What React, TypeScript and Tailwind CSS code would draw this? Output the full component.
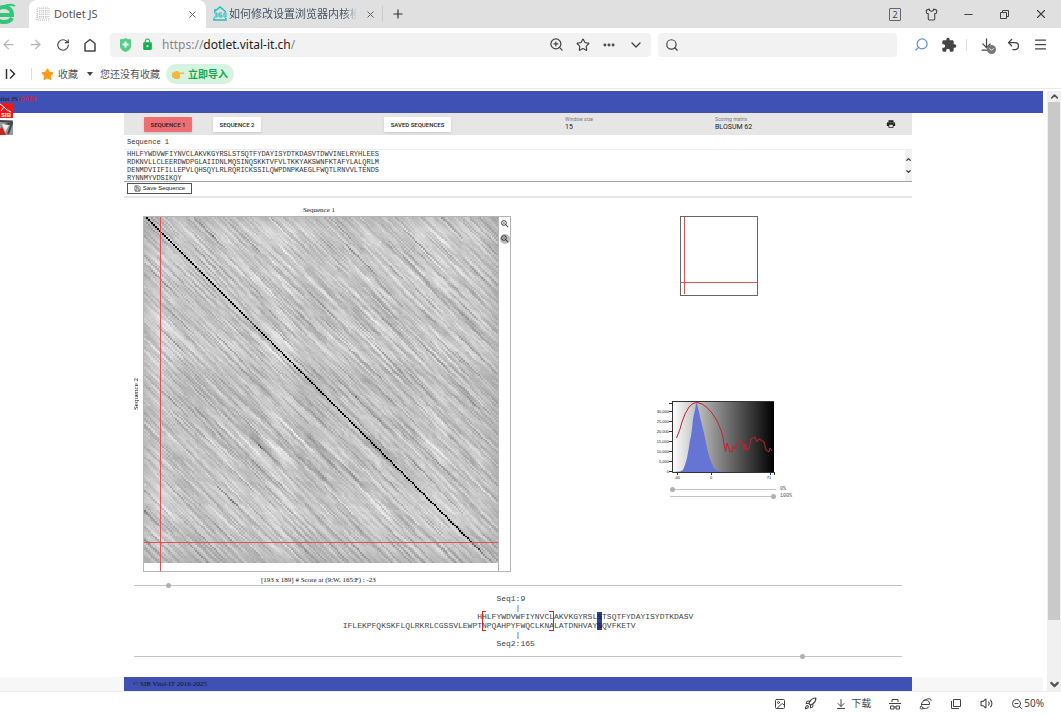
import { useEffect, useRef, useState } from "react";
import type { ReactNode } from "react";
import {
  ArrowDownToLine,
  ArrowLeft,
  ArrowRight,
  ChevronDown,
  ChevronUp,
  Ellipsis,
  Image as ImageIcon,
  Menu,
  Minus,
  Plus,
  Rocket,
  RotateCw,
  Save,
  Search,
  Shirt,
  Star,
  Undo2,
  Volume2,
  X,
  ZoomIn,
  ZoomOut,
} from "lucide-react";
import {
  MdExtension,
  MdLock,
  MdPrint,
  MdZoomIn,
  MdZoomOut,
} from "react-icons/md";

const SEQ1 =
  "HHLFYWDVWFIYNVCLAKVKGYRSLSTSQTFYDAYISYDTKDASVTDWVINELRYHLEES" +
  "RDKNVLLCLEERDWDPGLAIIDNLMQSINQSKKTVFVLTKKYAKSWNFKTAFYLALQRLM" +
  "DENMDVIIFILLEPVLQHSQYLRLRQRICKSSILQWPDNPKAEGLFWQTLRNVVLTENDS" +
  "RYNNMYVDSIKQY";

const SEQ2 =
  "HLYFWDVWYIYHFCKAKIKGYQRLISPDCCYDAFIVYDTKDPAVTEWVLAELVAKLEDP" +
  "REKHFNLCLEERDWLPGQPVLENLSQSIQLSKKTVFVMTDKYAKTENFKIAFYLSHQRLM" +
  "DEKVDVIILIFLEKPFQKSKFLQLRKRLCGSSVLEWPTNPQAHPYFWQCLKNALATDNHV" +
  "AYSQVFKETV";

const AMINO = "ARNDCQEGHILKMFPSTWYV";
const BLOSUM62 = [
  [4, -1, -2, -2, 0, -1, -1, 0, -2, -1, -1, -1, -1, -2, -1, 1, 0, -3, -2, 0],
  [-1, 5, 0, -2, -3, 1, 0, -2, 0, -3, -2, 2, -1, -3, -2, -1, -1, -3, -2, -3],
  [-2, 0, 6, 1, -3, 0, 0, 0, 1, -3, -3, 0, -2, -3, -2, 1, 0, -4, -2, -3],
  [-2, -2, 1, 6, -3, 0, 2, -1, -1, -3, -4, -1, -3, -3, -1, 0, -1, -4, -3, -3],
  [0, -3, -3, -3, 9, -3, -4, -3, -3, -1, -1, -3, -1, -2, -3, -1, -1, -2, -2, -1],
  [-1, 1, 0, 0, -3, 5, 2, -2, 0, -3, -2, 1, 0, -3, -1, 0, -1, -2, -1, -2],
  [-1, 0, 0, 2, -4, 2, 5, -2, 0, -3, -3, 1, -2, -3, -1, 0, -1, -3, -2, -2],
  [0, -2, 0, -1, -3, -2, -2, 6, -2, -4, -4, -2, -3, -3, -2, 0, -2, -2, -3, -3],
  [-2, 0, 1, -1, -3, 0, 0, -2, 8, -3, -3, -1, -2, -1, -2, -1, -2, -2, 2, -3],
  [-1, -3, -3, -3, -1, -3, -3, -4, -3, 4, 2, -3, 1, 0, -3, -2, -1, -3, -1, 3],
  [-1, -2, -3, -4, -1, -2, -3, -4, -3, 2, 4, -2, 2, 0, -3, -2, -1, -2, -1, 1],
  [-1, 2, 0, -1, -3, 1, 1, -2, -1, -3, -2, 5, -1, -3, -1, 0, -1, -3, -2, -2],
  [-1, -1, -2, -3, -1, 0, -2, -3, -2, 1, 2, -1, 5, 0, -2, -1, -1, -1, -1, 1],
  [-2, -3, -3, -3, -2, -3, -3, -3, -1, 0, 0, -3, 0, 6, -4, -2, -2, 1, 3, -1],
  [-1, -2, -2, -1, -3, -1, -1, -2, -2, -3, -3, -1, -2, -4, 7, -1, -1, -4, -3, -2],
  [1, -1, 1, 0, -1, 0, 0, 0, -1, -2, -2, 0, -1, -2, -1, 4, 1, -3, -2, -2],
  [0, -1, 0, -1, -1, -1, -1, -2, -2, -1, -1, -1, -1, -2, -1, 1, 5, -2, -2, 0],
  [-3, -3, -4, -4, -2, -2, -3, -2, -2, -3, -2, -3, -1, 1, -4, -3, -2, 11, 2, -3],
  [-2, -2, -2, -3, -2, -1, -2, -3, 2, -1, -1, -2, -1, 3, -3, -2, -2, 2, 7, -1],
  [0, -3, -3, -3, -1, -2, -2, -3, -3, 3, 1, -2, 1, -1, -2, -2, 0, -3, -1, 4],
];

const HALF_WINDOW = 7;
const MIN_SCORE = -47;
const MAX_SCORE = 76;

function scoreAt(i: number, j: number) {
  let sum = 0;
  for (let k = -HALF_WINDOW; k <= HALF_WINDOW; k++) {
    const a = SEQ1[i + k];
    const b = SEQ2[j + k];
    if (a && b) sum += BLOSUM62[AMINO.indexOf(a)][AMINO.indexOf(b)];
  }
  return sum;
}

// light background, steep ramp to black for the real matches
function greyFor(score: number) {
  const t = (score - MIN_SCORE) / (MAX_SCORE - MIN_SCORE);
  const shade = t < 0.52 ? t * 0.88 : 0.46 + (t - 0.52) * 5;
  return Math.round(255 * (1 - Math.max(0, Math.min(1, shade))));
}

function DotPlot() {
  const ref = useRef<HTMLCanvasElement>(null);

  useEffect(() => {
    const ctx = ref.current?.getContext("2d");
    if (!ctx) return;
    const w = SEQ1.length;
    const h = SEQ2.length;
    const image = ctx.createImageData(w, h);
    for (let j = 0; j < h; j++) {
      for (let i = 0; i < w; i++) {
        const grey = greyFor(scoreAt(i, j));
        image.data.set([grey, grey, grey, 255], (j * w + i) * 4);
      }
    }
    ctx.putImageData(image, 0, 0);
  }, []);

  return (
    <div className="flex w-[368px] border border-[#b5b5b5]">
      <div className="relative h-[354px] w-[354px]">
        <canvas
          ref={ref}
          width={SEQ1.length}
          height={SEQ2.length}
          className="h-[346px] w-[354px] [image-rendering:pixelated]"
        />
        <svg className="absolute inset-0" width="354" height="354">
          <path d="M16.5 0V354M0 325.5H354" stroke="#e05252" fill="none" />
        </svg>
      </div>
      <div className="flex flex-1 flex-col items-center gap-[5px] border-l border-[#b5b5b5] pt-[2px] text-[#333]">
        <button aria-label="Zoom in">
          <MdZoomIn size={10} />
        </button>
        <button aria-label="Zoom out" className="rounded-full bg-[#bbb]">
          <MdZoomOut size={10} />
        </button>
      </div>
    </div>
  );
}

const yTicks = ["30,000", "25,000", "20,000", "15,000", "10,000", "5,000", "0"];

function Histogram() {
  return (
    <svg width="132" height="82" viewBox="0 0 132 82" className="block">
      <defs>
        <linearGradient id="shade">
          <stop offset="0" stopColor="#fff" />
          <stop offset="0.15" stopColor="#d8d8d8" />
          <stop offset="0.5" stopColor="#7c7c7c" />
          <stop offset="1" stopColor="#000" />
        </linearGradient>
      </defs>
      <rect x="20" y="1" width="102" height="71" fill="url(#shade)" />
      <path
        d="M20 72L28 71.5 31 70 33 65 35 58 37 47 38 40 39 36 40 29 41 19 42 14 43 10 44 4 45 3 46 8 47 12 48 17 50 25 52 33 54 43 56 52 58 59 60 64 62 68 64 70 67 71 75 72Z"
        fill="#6674d4"
      />
      <path
        d="M24.5 38L28 29 30 22 33 14 37 7 41 3.5 45 2.5 50 4 55 7.5 60 13 65 21 69 30 71 37 72 44 73.5 52 75 43 78 52 80 52 81 46 83 49 85 43 89 40 91 44 92 50 93 44 95 50 97 49 99 39 103 37 105 42 107 39 109 40 112 42 114 50 117 52 118 48 120 51"
        fill="none"
        stroke="#c8202c"
      />
      <path d="M20.5 1V72.5H122M17 3.5H20M20 1.5H122" stroke="#333" fill="none" />
      {yTicks.map((label, i) => (
        <g key={label}>
          <path d={`M17 ${11.5 + i * 10}H20`} stroke="#333" />
          <text x="17" y={13 + i * 10} textAnchor="end" fontSize="4" fill="#111">
            {label}
          </text>
        </g>
      ))}
      <path d="M25.5 72V75M59.5 72V75M118.5 72V75M122.5 72V75" stroke="#333" />
      <text x="25" y="79" textAnchor="middle" fontSize="4" fill="#111">-40</text>
      <text x="59" y="79" textAnchor="middle" fontSize="4" fill="#111">0</text>
      <text x="117" y="79" textAnchor="middle" fontSize="4" fill="#111">71</text>
    </svg>
  );
}

type SliderProps = {
  label: string;
  min?: number;
  max: number;
  initial: number;
  className?: string;
};

function Slider({ label, min = 0, max, initial, className = "w-full" }: SliderProps) {
  const [value, setValue] = useState(initial);
  return (
    <input
      type="range"
      aria-label={label}
      min={min}
      max={max}
      value={value}
      onChange={(e) => setValue(Number(e.target.value))}
      className={`block h-[5px] appearance-none bg-[linear-gradient(#c4c4c4,#c4c4c4)] bg-[length:100%_1px] bg-center bg-no-repeat [&::-webkit-slider-thumb]:size-[5px] [&::-webkit-slider-thumb]:appearance-none [&::-webkit-slider-thumb]:rounded-full [&::-webkit-slider-thumb]:bg-[#b0b0b0] ${className}`}
    />
  );
}

function IconButton({ label, children }: { label: string; children: ReactNode }) {
  return (
    <button aria-label={label} className="flex items-center justify-center">
      {children}
    </button>
  );
}

function TabBar() {
  return (
    <div className="flex h-7 items-center bg-[#e0e0e0] text-[11px] text-[#555]">
      <div className="flex h-full w-[29px] items-center overflow-hidden">
        <svg width="17" height="26" viewBox="0 0 17 26" fill="none">
          <path
            d="M-3 14H12C12 8 8 6 4 6C-1 6 -4 9 -4 14C-4 19 0 21 4 21C8 21 11 19 12 17"
            stroke="#2fc779"
            strokeWidth="4"
          />
          <path d="M2 6C8 3 12 3 15 5" stroke="#2fc779" strokeWidth="2" />
        </svg>
      </div>
      <div className="flex h-full w-[177px] items-center rounded-t-lg bg-white pr-2 pl-[7px]">
        <svg width="14" height="14" viewBox="0 0 14 14">
          <path
            d="M1 1H13V13H1ZM4 1V13M7 1V13M10 1V13M1 4H13M1 7H13M1 10H13"
            stroke="#bbb"
            fill="none"
            strokeDasharray="1 1"
          />
        </svg>
        <span className="ml-1 flex-1">Dotlet JS</span>
        <IconButton label="Close tab">
          <X size={11} strokeWidth={2} />
        </IconButton>
      </div>
      <div className="flex h-full w-[170px] items-center pl-[7px]">
        <svg width="14" height="16" viewBox="0 0 14 16" fill="none" stroke="#1fbfc0" strokeWidth="1.5">
          <path d="M1 6L7 1 13 6M2 5V3M1 12V14H13V12" />
          <path d="M1 7H4V11H1M2 9H4M6 7H9M6 7V11H9V9H6M11 7H13V11H11Z" strokeWidth="1" />
        </svg>
        <span className="ml-[2px] w-[128px] overflow-hidden whitespace-nowrap text-[#445566] [mask-image:linear-gradient(90deg,#000_90%,transparent)]">
          如何修改设置浏览器内核模式
        </span>
        <span className="flex-1" />
        <IconButton label="Close tab">
          <X size={11} strokeWidth={2} />
        </IconButton>
      </div>
      <div className="ml-[6px] flex h-4 items-center border-l border-[#ccc] pl-2 text-[#333]">
        <IconButton label="New tab">
          <Plus size={14} />
        </IconButton>
      </div>
      <div className="ml-auto flex items-center gap-6 pr-[13px] text-[#444]">
        <button className="flex h-[13px] w-3 items-center justify-center rounded-[1px] border border-[#666] text-[9px] leading-none">
          2
        </button>
        <IconButton label="Skins">
          <Shirt size={13} />
        </IconButton>
        <IconButton label="Minimize">
          <Minus size={13} strokeWidth={2} />
        </IconButton>
        <IconButton label="Restore">
          <svg width="11" height="11" viewBox="0 0 11 11" fill="none" stroke="currentColor">
            <path d="M1.5 3.5H7.5V9.5H1.5ZM3.5 3V1.5H9.5V7.5H8" />
          </svg>
        </IconButton>
        <IconButton label="Close window">
          <X size={14} strokeWidth={2} />
        </IconButton>
      </div>
    </div>
  );
}

function AddressBar() {
  return (
    <div className="flex h-8 items-center pt-px text-[#444]">
      <div className="flex w-[110px] items-center gap-[13px] pl-px">
        <span className="flex gap-3 text-[#b5b5b5]">
          <IconButton label="Back">
            <ArrowLeft size={15} strokeWidth={2} />
          </IconButton>
          <IconButton label="Forward">
            <ArrowRight size={15} strokeWidth={2} />
          </IconButton>
        </span>
        <IconButton label="Reload">
          <RotateCw size={14} strokeWidth={2} />
        </IconButton>
        <IconButton label="Home">
          <svg width="14" height="14" viewBox="0 0 14 14" fill="none" stroke="currentColor" strokeWidth="1.5">
            <path d="M2 13V5.5L7 1.5 12 5.5V13Z" strokeLinejoin="round" />
          </svg>
        </IconButton>
      </div>
      <div className="flex h-6 flex-[527] items-center rounded-sm bg-[#f2f2f2] px-[7px]">
        <svg width="17" height="14" viewBox="0 0 17 14">
          <path d="M3 1Q6 2 8.5 0Q11 2 14 1V8Q14 12 8.5 14Q3 12 3 8Z" fill="#53cf85" />
          <path d="M8.5 3.5V9.5M5.5 6.5H11.5" stroke="#fff" strokeWidth="2" />
        </svg>
        <MdLock size={13} className="ml-[7px] text-[#14b04f]" />
        <div className="ml-2 flex-1 text-[12px] text-[#888]">
          https://<span className="text-[#222]">dotlet.vital-it.ch</span>/
        </div>
        <div className="flex items-center gap-3">
          <IconButton label="Zoom">
            <ZoomIn size={15} strokeWidth={2} />
          </IconButton>
          <IconButton label="Bookmark">
            <Star size={14} strokeWidth={2} />
          </IconButton>
          <IconButton label="More">
            <Ellipsis size={14} strokeWidth={3} />
          </IconButton>
          <IconButton label="Expand">
            <ChevronDown size={16} strokeWidth={2} />
          </IconButton>
        </div>
      </div>
      <div className="ml-[7px] flex h-6 flex-[225] items-center rounded-sm bg-[#f2f2f2] px-[7px]">
        <Search size={14} strokeWidth={2} />
        <input aria-label="Search" className="min-w-0 flex-1 bg-transparent pl-2 text-xs outline-none" />
      </div>
      <div className="flex w-[164px] items-center pl-[17px]">
        <IconButton label="Quick search">
          <Search size={15} className="-scale-x-100 text-[#5b8ee0]" />
        </IconButton>
        <span className="ml-3">
          <IconButton label="Extensions">
            <MdExtension size={16} />
          </IconButton>
        </span>
        <span className="ml-[9px] h-3 w-px bg-[#ddd]" />
        <span className="relative ml-3">
          <IconButton label="Downloads">
            <ArrowDownToLine size={15} />
          </IconButton>
          <span className="absolute top-2 left-2 flex size-[9px] items-center justify-center rounded-full bg-[#777] text-white">
            <ChevronDown size={7} strokeWidth={3} />
          </span>
        </span>
        <span className="ml-3">
          <IconButton label="Undo">
            <Undo2 size={15} />
          </IconButton>
        </span>
        <span className="ml-3">
          <IconButton label="Menu">
            <Menu size={15} />
          </IconButton>
        </span>
      </div>
    </div>
  );
}

function BookmarkBar() {
  return (
    <div className="flex h-7 items-center text-[10px] text-[#555]">
      <IconButton label="Show side bar">
        <svg width="12" height="12" viewBox="0 0 12 12" fill="none" stroke="#333" strokeWidth="1.5" className="ml-[5px]">
          <path d="M1.5 1V11M5 1.5L9.5 6 5 10.5" />
        </svg>
      </IconButton>
      <span className="ml-[14px] h-3 w-px bg-[#ddd]" />
      <Star size={13} className="ml-[9px] fill-[#ff9a16] text-[#ff9a16]" />
      <button className="ml-1 flex items-center gap-[9px]">
        收藏 <span className="w-[6px] border-x-3 border-t-4 border-x-transparent border-t-[#444]" />
      </button>
      <span className="ml-[7px]">您还没有收藏</span>
      <button className="ml-[6px] flex h-5 items-center gap-1 rounded-full bg-[#d5f3e0] px-[6px] font-bold text-[#14a851]">
        <svg width="12" height="9" viewBox="0 0 12 9">
          <path d="M0 3L4 1H6L7 2.5H12V4H8V8L6 9H3L0 7Z" fill="#f6b53d" />
        </svg>
        立即导入
      </button>
    </div>
  );
}

function ToolBar() {
  return (
    <div className="flex h-[22px] items-center bg-[#e6e6e6] pl-5 font-['Roboto',sans-serif] text-[6px] text-[#222]">
      <button className="h-[15px] w-12 rounded-[1px] bg-[#ee6e73] font-medium shadow-sm">SEQUENCE 1</button>
      <button className="ml-[21px] h-[15px] w-12 rounded-[1px] bg-white font-medium shadow-sm">SEQUENCE 2</button>
      <button className="ml-[123px] h-[15px] w-[67px] rounded-[1px] bg-white font-medium shadow-sm">
        SAVED SEQUENCES
      </button>
      <label className="ml-[114px] flex w-[150px] flex-col text-[5px] leading-[7px] text-[#777]">
        Window size
        <input defaultValue="15" className="h-[9px] w-20 bg-transparent text-[7px] leading-[9px] text-[#222]" />
      </label>
      <label className="flex w-[120px] flex-col text-[5px] leading-[7px] text-[#777]">
        Scoring matrix
        <select className="h-[9px] appearance-none bg-transparent text-[7px] leading-[9px] text-[#222]">
          <option>BLOSUM 62</option>
        </select>
      </label>
      <button aria-label="Print" className="mr-4 ml-auto">
        <MdPrint size={10} />
      </button>
    </div>
  );
}

function SequenceInput() {
  return (
    <div className="border-b-2 border-[#e6e6e6] pb-[2px] font-['Liberation_Mono',monospace] text-[7px] text-[#333]">
      <input
        aria-label="Sequence name"
        defaultValue="Sequence 1"
        className="block h-[15px] w-full border-b border-[#eee] px-[3px]"
      />
      <div className="flex border-b border-[#a5a5a5]">
        <textarea
          aria-label="Sequence"
          rows={4}
          cols={60}
          defaultValue={SEQ1}
          className="h-[31px] w-[256px] resize-none overflow-hidden pl-[3px] leading-[8px] break-all"
        />
        <div className="ml-auto flex w-[7px] flex-col items-center justify-center gap-[5px] bg-[#f1f1f1]">
          <ChevronUp size={7} strokeWidth={4} />
          <ChevronDown size={7} strokeWidth={4} />
        </div>
      </div>
      <button className="mt-px ml-[3px] flex h-[11px] w-[65px] items-center justify-center gap-[2px] border border-[#555] font-['Liberation_Sans',sans-serif] text-[6px] text-[#222]">
        <Save size={7} /> Save Sequence
      </button>
    </div>
  );
}

function MiniMap() {
  return (
    <svg width="79" height="80" className="ml-2 block">
      <rect x="0.5" y="0.5" width="77" height="79" fill="#fff" stroke="#666" />
      <path d="M4.5 1V78M1 66.5H78" stroke="#e05252" />
    </svg>
  );
}

// Residues around the cursor, padded so position 9 faces position 165
function Alignment() {
  const top = " ".repeat(28) + SEQ1.slice(0, 45);
  const bottom = SEQ2.slice(-61).padEnd(73);
  const row = (s: string) => (
    <>
      {s.slice(0, 53)}
      <span className="bg-[#2f3f9f] text-[#101840]">{s[53]}</span>
      {s.slice(54)}
    </>
  );
  return (
    <div className="flex justify-center py-[6px]">
      <div className="relative w-[73ch] font-['Liberation_Mono',monospace] text-[8px] leading-[9px] whitespace-pre text-[#444]">
        <div>{" ".repeat(32)}Seq1:9</div>
        <div>{" ".repeat(36)}|</div>
        <div>{row(top)}</div>
        <div>{row(bottom)}</div>
        <div>{" ".repeat(36)}|</div>
        <div>{" ".repeat(32)}Seq2:165</div>
        <span className="absolute top-[17px] left-[29ch] h-5 w-1 border-y border-l border-[#d22]" />
        <span className="absolute top-[17px] left-[43ch] h-5 w-[1ch] border-y border-r border-[#d22]" />
      </div>
    </div>
  );
}

function DotletPage() {
  return (
    <main className="relative flex min-w-0 flex-1 flex-col font-['Liberation_Serif',serif] text-[7px] text-[#111]">
      <header className="h-[22px] overflow-hidden bg-[#3f51b5] pt-[3px] leading-[9px]">
        <h1 className="-ml-2 whitespace-nowrap">
          Dotlet JS{" "}
          <em className="font-['Liberation_Sans',sans-serif] text-[8px] font-bold text-[#d0213f]">beta</em>
        </h1>
      </header>
      <svg className="absolute top-3 left-0" width="13" height="33" viewBox="0 0 13 33">
        <rect width="13" height="15" fill="#f01818" />
        <path d="M0 1L4 4 7 7 11 9M4 4L1 8" stroke="#fff" fill="none" />
        <text x="1" y="14" fontSize="6" fontWeight="bold" fontFamily="Liberation Sans" fill="#fff">SIB</text>
        <rect y="17" width="13" height="15" fill="#999" />
        <path d="M0 18L12 19M5 22L12 20 8 31" stroke="#444" strokeWidth="2" fill="none" />
        <path d="M0 32V26L2 24 6 32Z" fill="#c22" />
        <path d="M2 21L9 22 5 29Z" fill="#eee" />
      </svg>
      <div className="flex-1 pr-[131px] pl-[124px]">
        <ToolBar />
        <SequenceInput />
        <section className="flex pt-[6px]">
          <div className="grid w-[387px] grid-cols-[19px_368px]">
            <h2 className="col-start-2 text-center leading-[12px]">
              <span className="mr-4">Sequence 1</span>
            </h2>
            <h2 className="col-start-1 flex items-center justify-end pr-[2px]">
              <span className="rotate-180 leading-[9px] [writing-mode:vertical-rl]">Sequence 2</span>
            </h2>
            <DotPlot />
          </div>
          <div className="pt-3 pl-[161px]">
            <MiniMap />
            <div className="-ml-5 pt-[104px] font-['Liberation_Sans',sans-serif]">
              <Histogram />
            </div>
            <div className="-ml-[2px] flex flex-col gap-px pt-1 font-['Liberation_Mono',monospace] text-[5px] leading-[6px] text-[#555]">
              <div className="flex items-center gap-1">
                <Slider label="Low threshold" max={100} initial={0} className="w-[106px]" /> 0%
              </div>
              <div className="flex items-center gap-1">
                <Slider label="High threshold" max={100} initial={100} className="w-[106px]" /> 100%
              </div>
            </div>
          </div>
        </section>
        <div className="px-[10px]">
          <p className="pt-[6px] pl-[127px] leading-[5px]">[193 x 189] # Score at (9:W, 165:F) : -23</p>
          <Slider label="Position in sequence 1" max={193} initial={8} />
          <Alignment />
          <Slider label="Position in sequence 2" max={189} initial={165} />
        </div>
      </div>
      <div className="bg-[#f7f7f7] pr-[131px] pl-[124px]">
        <footer className="h-[14px] bg-[#3f51b5] pl-[9px] leading-[14px]">© SIB Vital-IT 2016-2025</footer>
      </div>
    </main>
  );
}

function StatusBar() {
  return (
    <div className="flex h-6 items-center justify-end gap-[18px] border-t border-[#eee] pr-[17px] text-[10px] text-[#444]">
      <IconButton label="Pictures">
        <ImageIcon size={12} />
      </IconButton>
      <IconButton label="Boost">
        <Rocket size={13} />
      </IconButton>
      <button className="flex items-center gap-1">
        <ArrowDownToLine size={12} /> 下载
      </button>
      <IconButton label="Private window">
        <svg width="12" height="12" viewBox="0 0 12 12" fill="none" stroke="currentColor">
          <path d="M3 4V1.5H9V4M0 5.5H12M1.5 8H5V11H1.5ZM7 8H10.5V11H7ZM5 9H7" />
        </svg>
      </IconButton>
      <IconButton label="Browser mode">
        <svg width="13" height="12" viewBox="0 0 13 12" fill="none" stroke="currentColor">
          <path d="M3 6.5H10.5C11 1 4 0.5 2.5 6C1.5 11 8 12 10 8.5M4 3C8 0 13 0 12 3M2 8C0 11 2 12 5 10" />
        </svg>
      </IconButton>
      <IconButton label="Split view">
        <svg width="12" height="12" viewBox="0 0 12 12" fill="none" stroke="currentColor">
          <path d="M3.5 1.5H10.5V8.5H3.5ZM1.5 3V10.5H9" />
        </svg>
      </IconButton>
      <IconButton label="Sound">
        <Volume2 size={13} />
      </IconButton>
      <button className="flex items-center gap-px">
        <ZoomOut size={12} /> 50%
      </button>
    </div>
  );
}

export default function App() {
  return (
    <div className="flex min-h-screen flex-col bg-white font-['Noto_Sans','Noto_Sans_CJK_SC',sans-serif]">
      <TabBar />
      <AddressBar />
      <BookmarkBar />
      <div className="flex flex-1 border-t border-[#e8e8e8] pt-[2px]">
        <DotletPage />
        <div className="ml-1 flex w-[14px] flex-col items-center bg-[#f0f0f0] text-[#555]">
          <ChevronUp size={11} strokeWidth={4} />
          <div className="w-3 flex-[517] bg-[#c9c9c9]" />
          <div className="flex-[58]" />
          <ChevronDown size={13} strokeWidth={4} />
        </div>
      </div>
      <StatusBar />
    </div>
  );
}
